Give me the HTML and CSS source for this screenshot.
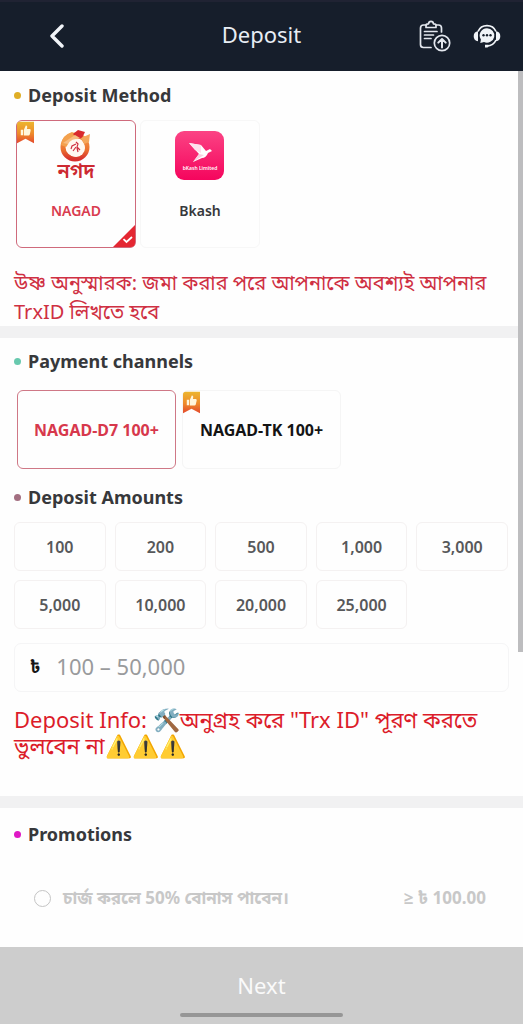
FILE: index.html
```html
<!DOCTYPE html>
<html lang="en">
<head>
<meta charset="utf-8">
<meta name="viewport" content="width=device-width, initial-scale=1">
<title>Deposit</title>
<link rel="stylesheet" href="styles.css">
</head>
<body>
<svg class="defs" aria-hidden="true">
  <defs>
    <linearGradient id="ribbon" x1="0" y1="0" x2="0" y2="1"><stop offset="0" stop-color="#ecb62f"/><stop offset=".55" stop-color="#ee8a2b"/><stop offset="1" stop-color="#e3472c"/></linearGradient>
    <linearGradient id="pink" x1="0" y1="0" x2="0" y2="1"><stop offset="0" stop-color="#fb4384"/><stop offset="1" stop-color="#f5055d"/></linearGradient>
    <linearGradient id="flame" x1="0" y1="0" x2="0" y2="1"><stop offset="0" stop-color="#f5a04c"/><stop offset=".6" stop-color="#ec7430"/><stop offset="1" stop-color="#d7312d"/></linearGradient>
    <symbol id="badge" viewBox="0 0 18 23">
      <path d="M3 0H18V23L9 18 0 23V3Q0 0 3 0Z" fill="url(#ribbon)"/>
      <path d="M4 8.500H6.500V14.500H4ZM7.300 8.500 9.300 4.200Q11.200 4 10.800 6.200L10.500 7.800H13.600Q14.800 8 14.500 9.300L13.500 13.600Q13.200 14.600 12.200 14.600H7.300Z" fill="#fff6dc"/>
    </symbol>
  </defs>
</svg>
<div class="app">
  <header class="topbar">
    <button class="icon-button back" aria-label="Back"><svg width="18" height="24" viewBox="0 0 18 24"><path d="M14 2 4 12l10 10" fill="none" stroke="#f1f4f8" stroke-width="3.400" stroke-linecap="round" stroke-linejoin="round"/></svg></button>
    <h1 class="title">Deposit</h1>
    <div class="actions">
      <button class="icon-button" aria-label="Deposit records">
        <svg width="32" height="32" viewBox="0 0 32 32" fill="none" stroke="#e3e7ee" stroke-width="1.700" stroke-linecap="round" stroke-linejoin="round">
          <path d="M7.500 5H4.500Q1.500 5 1.500 8V24.500Q1.500 27.500 4.500 27.500H12M17 5H19.500Q22.500 5 22.500 8V12"/>
          <path d="M7 7.500V5Q7 3.800 9.500 3.800 9.800 1.300 12 1.300T14.500 3.800Q17 3.800 17 5V7.500Z"/>
          <path d="M5.500 11.500H18M5.500 15H14.500M5.500 18.500H12"/>
          <circle cx="23" cy="23" r="7.700"/>
          <path d="M23 27.500V19.500M19.300 22.600 23 19l3.700 3.600" stroke-width="2"/>
        </svg>
      </button>
      <button class="icon-button" aria-label="Customer service">
        <svg width="28" height="26" viewBox="0 0 28 26">
          <path d="M5 8.500A9.800 9.800 0 0 1 23 8.500M23 17Q20.500 22.800 14 23" fill="none" stroke="#f1f4f8" stroke-width="1.700"/>
          <path d="M5 8.200V18.300Q.7 17.800.7 13.200T5 8.200ZM23 8.200V18.300Q27.300 17.800 27.300 13.200T23 8.200Z" fill="#f1f4f8"/>
          <path d="M14 5.200a7.400 7.200 0 1 1-3 13.800L7.300 20l.6-3.500A7.400 7.300 0 0 1 14 5.200Z" fill="#f1f4f8"/>
          <path d="M12 21.700H15.500Q16.500 23.300 14.500 24.400H12Z" fill="#f1f4f8"/>
          <g fill="#161e2b"><circle cx="10.500" cy="12.200" r="1.200"/><circle cx="14" cy="12.200" r="1.200"/><circle cx="17.500" cy="12.200" r="1.200"/></g>
        </svg>
      </button>
    </div>
  </header>

  <main class="content">
    <div class="scrollbar" aria-hidden="true"></div>
    <section class="section">
      <h2 class="heading amber">Deposit Method</h2>
      <div class="methods">
        <button class="method selected" aria-pressed="true">
          <svg class="badge" aria-hidden="true"><use href="#badge"/></svg>
          <svg class="logo" viewBox="0 0 50 50" aria-hidden="true">
            <circle cx="24" cy="17" r="12" fill="none" stroke="url(#flame)" stroke-width="5"/>
            <path d="M10 15Q11 5 21 2L27 6 15 17Z" fill="#f3a14d"/><path d="M22 4 27 0 34 2 31 8 27 9Z" fill="#d92a2e"/><path d="M30 8 39 4 38 12 33 14Z" fill="#f4a75b"/><path d="M12 13 24 5 29 8 17 14Z" fill="#f8bd80"/>
            <circle cx="25" cy="18" r="9" fill="#fff9f1"/>
            <path d="M25 12l2 2-1 3 3 3M25 14l-4 2-1 3M25 17l-3 4M26 18l1 4" fill="none" stroke="#ce3040" stroke-width="1.200"/>
            <text class="logo-text" x="25" y="48" text-anchor="middle">নগদ</text>
          </svg>
          <span>NAGAD</span>
          <svg class="corner" viewBox="0 0 22 22" aria-hidden="true"><path d="M22 0V18Q22 22 18 22H0Z" fill="#e42732"/><path d="M10.500 14.200 13.500 17l5.500-5" fill="none" stroke="#fff" stroke-width="1.800"/></svg>
        </button>
        <button class="method" aria-pressed="false">
          <svg class="logo" viewBox="0 0 50 50" aria-hidden="true">
            <rect x="0" y="1" width="49" height="49" rx="9" fill="url(#pink)"/>
            <path d="M14 13 26 15 31 21 35 19 37 21 33 23Q31 28 27 28L18 32 24 24Z" fill="#fff"/><path d="M14 13 20 20 26 23 26 15Z" fill="#fee1ed"/><path d="M24 24 29 25 18 32Z" fill="#f9cfe0"/>
            <text class="logo-caption" x="25" y="40" text-anchor="middle">bKash Limited</text>
          </svg>
          <span>Bkash</span>
        </button>
      </div>
      <p class="reminder">উষ্ণ অনুস্মারক: জমা করার পরে আপনাকে অবশ্যই আপনার TrxID লিখতে হবে</p>
    </section>

    <section class="section main-section">
      <h2 class="heading green">Payment channels</h2>
      <div class="channels">
        <button class="channel selected" aria-pressed="true">NAGAD-D7 100+</button>
        <button class="channel" aria-pressed="false"><svg class="badge" aria-hidden="true"><use href="#badge"/></svg>NAGAD-TK 100+</button>
      </div>
      <h2 class="heading mauve">Deposit Amounts</h2>
      <div class="amounts">
        <button class="amount">100</button><button class="amount">200</button><button class="amount">500</button><button class="amount">1,000</button><button class="amount">3,000</button>
        <button class="amount">5,000</button><button class="amount">10,000</button><button class="amount">20,000</button><button class="amount">25,000</button>
      </div>
      <label class="field"><span class="currency">৳</span><input type="text" inputmode="numeric" aria-label="Deposit amount" placeholder="100 – 50,000"></label>
      <p class="info">Deposit Info: 🛠️অনুগ্রহ করে "Trx ID" পূরণ করতে ভুলবেন না⚠️⚠️⚠️</p>
    </section>

    <section class="section promotions">
      <h2 class="heading magenta">Promotions</h2>
      <label class="promo"><input type="radio" name="promotion" disabled><span>চার্জ করলে 50% বোনাস পাবেন।</span><span class="minimum">≥ ৳ 100.00</span></label>
    </section>
  </main>

  <footer class="footer">
    <button class="next" disabled>Next</button>
    <div class="home-bar" aria-hidden="true"></div>
  </footer>
</div>
</body>
</html>
```
FILE: styles.css
```css
* { box-sizing: border-box; }
body { margin: 0; background: #fefefe; color: #37383b; font-family: "Noto Sans", "Noto Sans Bengali", "Open Sans", sans-serif; }
button, input { font: inherit; color: inherit; }
button { padding: 0; border: 0; background: none; }
h1, h2, p { margin: 0; }
.defs { position: absolute; width: 0; height: 0; }
.app { min-height: 100vh; display: flex; flex-direction: column; }

.topbar { height: 71px; padding: 0 22px 2px 48px; background: #161e2b; display: grid; grid-template-columns: 1fr auto 1fr; align-items: center; border-top: 2px solid #202333; }
.icon-button { display: flex; align-items: center; justify-content: center; }
.back { justify-self: start; }
.title { color: #e8edf4; font-size: 22px; line-height: 28px; font-weight: 400; margin: 0 26px 4px 0; }
.actions { display: flex; align-items: center; justify-self: end; gap: 22px; }

.content { position: relative; flex: 1; display: flex; flex-direction: column; }
.scrollbar { position: absolute; top: 0; right: 0; width: 5px; height: 581px; background: #bdbdbf; }
.section { padding: 12px 14px 0; }
.section + .section { border-top: 12px solid #f1f1f2; }
.section.main-section { padding-top: 11px; padding-bottom: 38px; }
.heading { display: flex; align-items: center; gap: 7px; font-size: 18px; line-height: 24px; font-weight: 700; }
.heading::before { content: ""; width: 7px; height: 7px; border-radius: 50%; background: currentColor; }
.amber::before { background: #dfae26; }
.green::before { background: #68c9ae; }
.mauve::before { background: #a36f81; }
.magenta::before { background: #df18c5; }

.methods { display: flex; gap: 4px; padding: 13px 2px 0; }
.method { position: relative; width: 120px; height: 128px; padding-top: 9px; display: flex; flex-direction: column; align-items: center; gap: 20px; border: 1px solid #f7f7f7; border-radius: 6px; font-size: 14px; line-height: 22px; font-weight: 600; }
.selected { border-color: #cf6a7c; color: #d93b4e; }
.badge { position: absolute; top: 0; left: 0; width: 17px; height: 23px; }
.corner { position: absolute; right: 0; bottom: 0; width: 22px; height: 22px; }
.logo { width: 50px; height: 50px; overflow: visible; }
.logo-text { font-size: 20px; font-weight: 600; fill: #cd2931; }
.logo-caption { font-size: 5px; font-weight: 600; fill: #fff; }
.reminder { padding-top: 20px; color: #cf3043; font-size: 20px; line-height: 29px; }

.channels { display: flex; gap: 6px; padding: 17px 3px 16px; }
.channel { position: relative; width: 159px; height: 79px; border: 1px solid #f5f5f5; border-radius: 6px; font-size: 16px; font-weight: 700; color: #141414; }
.channel.selected { border-color: #cf7886; color: #d7384c; }
.amounts { display: grid; grid-template-columns: repeat(5, 1fr); gap: 9px; padding: 13px 1px 0 0; }
.amount { height: 49px; border: 1px solid #f4f1f1; border-radius: 6px; color: #57585a; font-size: 16px; font-weight: 600; }
.field { display: flex; align-items: center; height: 49px; margin-top: 14px; padding: 0 15px; gap: 16px; border: 1px solid #f5f5f6; border-radius: 7px; }
.currency { color: #161616; font-size: 17px; font-weight: 700; }
.field input { flex: 1; min-width: 0; height: 32px; margin-bottom: 4px; border: 0; outline: 0; padding: 0; background: transparent; font-size: 22px; }
.field input::placeholder { color: #999a9c; opacity: 1; }
.info { padding-top: 14px; color: #dc1c2a; font-size: 22px; line-height: 26px; }

.promotions { padding-top: 14px; }
.promo { display: flex; align-items: center; gap: 12px; padding: 40px 23px 34px 20px; color: #c8c8c8; font-size: 17px; line-height: 24px; font-weight: 700; }
.promo input { appearance: none; width: 17px; height: 17px; margin: 0; border: 1px solid #c4c4c4; border-radius: 50%; }
.minimum { margin-left: auto; }
.footer { display: flex; flex-direction: column; align-items: center; height: 77px; padding-top: 24px; background: #cdcdcd; }
.next { color: #fafafa; font-size: 22px; line-height: 28px; }
.home-bar { width: 31%; height: 4px; margin-top: 14px; border-radius: 2px; background: #969696; }
```
